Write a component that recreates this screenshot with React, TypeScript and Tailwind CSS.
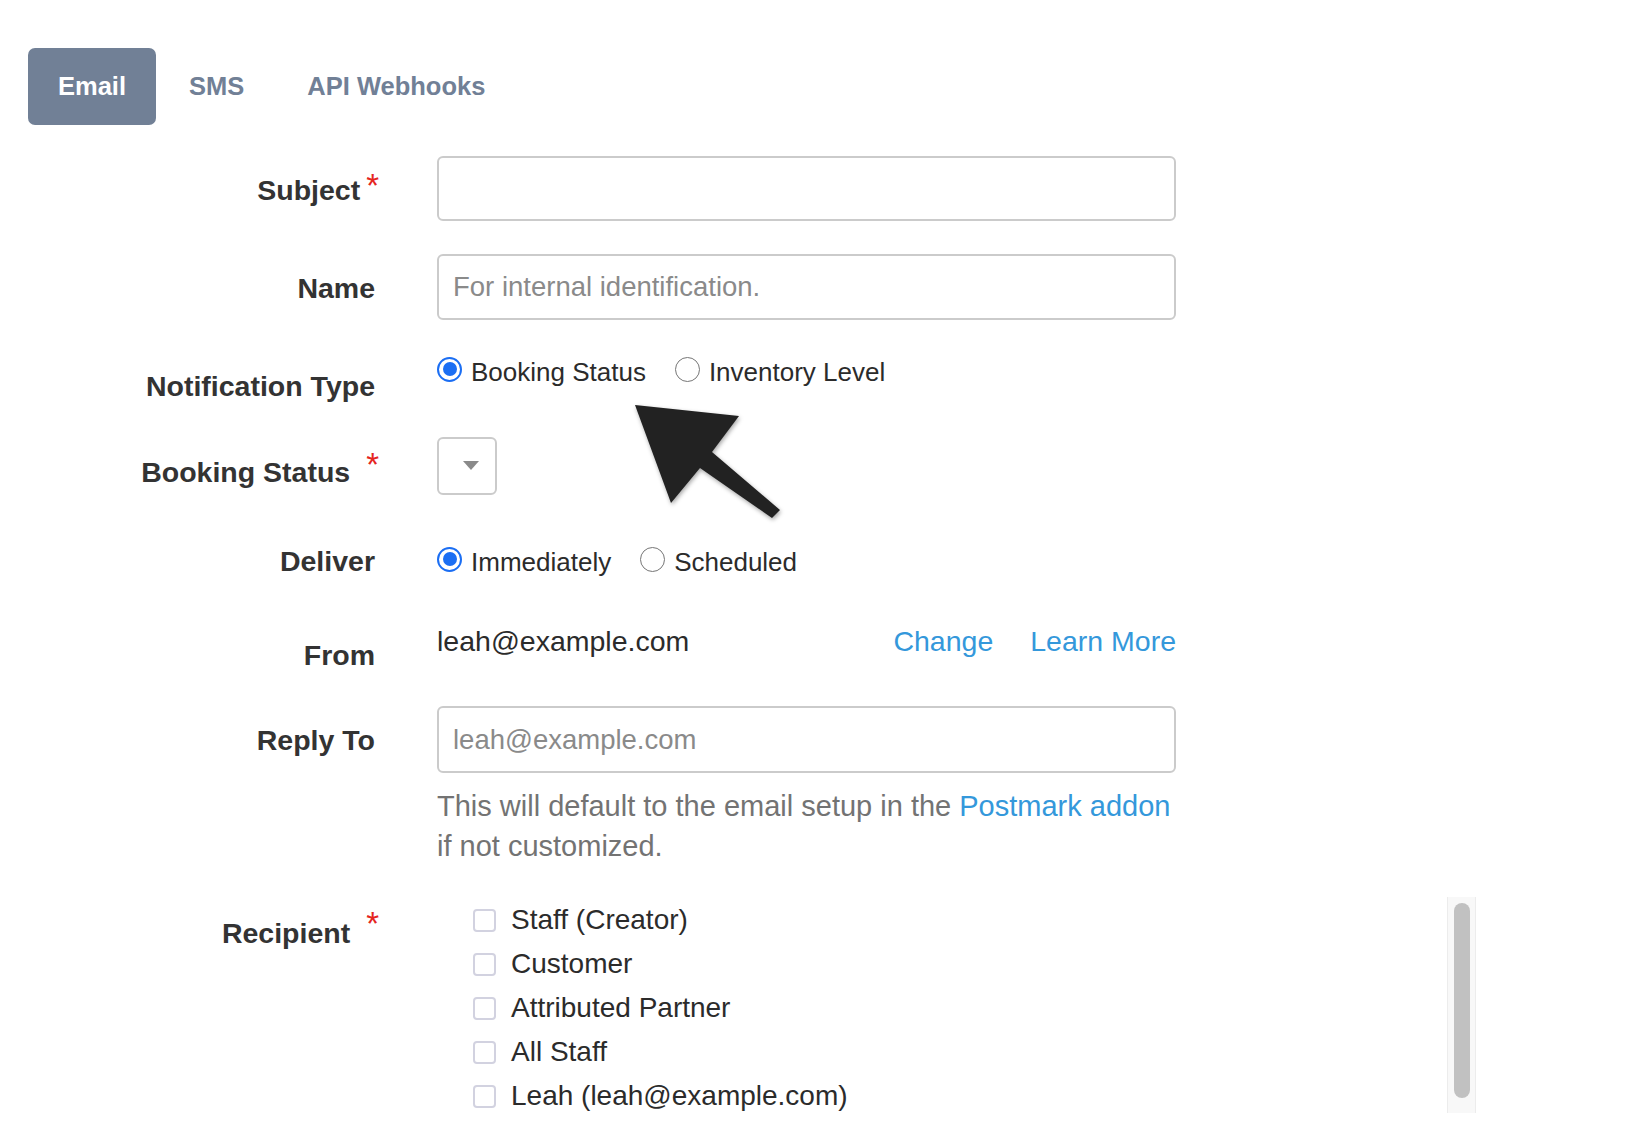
import React from "react";

function Label({ text, star, starGap = "ml-[8px]", starTop = "-top-[0px]", mt }: { text: string; star?: boolean; starGap?: string; starTop?: string; mt: string }) {
  return (
    <div className={`w-[379px] shrink-0 text-right font-bold text-[28.5px] leading-[40px] text-[#333333] whitespace-nowrap ${mt} ${star ? "" : "pr-[4px]"}`}>
      {text}
      {star && (
        <span className={`text-[#e5261f] font-normal text-[33px] relative ${starTop} ${starGap}`}>*</span>
      )}
    </div>
  );
}

function Radio({ checked, label }: { checked?: boolean; label: string }) {
  return (
    <div className="flex items-center">
      {checked ? (
        <span className="w-[25px] h-[25px] -mt-[6px] rounded-full border-[2.5px] border-[#1b6ef3] flex items-center justify-center">
          <span className="w-[14px] h-[14px] rounded-full bg-[#1b6ef3]" />
        </span>
      ) : (
        <span className="w-[25px] h-[25px] -mt-[6px] rounded-full border-[1.5px] border-[#767676]" />
      )}
      <span className="ml-[9px] text-[26px] leading-[40px] text-[#2b2b2b] whitespace-nowrap">{label}</span>
    </div>
  );
}

function Check({ label }: { label: string }) {
  return (
    <div className="h-[44px] flex items-center">
      <span className="w-[23px] h-[23px] border-2 border-[#d2d2e0] rounded-[4px] shrink-0" />
      <span className="ml-[15px] text-[28px] text-[#2b2b2b] whitespace-nowrap">{label}</span>
    </div>
  );
}

export default function App() {
  return (
    <div className="w-[1630px] h-[1132px] overflow-hidden bg-white relative font-['Liberation_Sans',Arial,sans-serif]">
      {/* Tabs */}
      <div className="flex items-center pt-[48px] pl-[28px] gap-[3px]">
        <div className="h-[77px] px-[30px] rounded-[7px] bg-[#718096] text-white font-bold text-[25.5px] flex items-center">Email</div>
        <div className="h-[77px] px-[30px] text-[#718096] font-bold text-[25.5px] flex items-center">SMS</div>
        <div className="h-[77px] px-[30px] text-[#718096] font-bold text-[25.5px] flex items-center">API Webhooks</div>
      </div>

      <div className="mt-[31px]">
        {/* Subject */}
        <div className="flex items-start">
          <Label text="Subject" star starGap="ml-[6px]" starTop="-top-[3px]" mt="mt-[13px]" />
          <div className="ml-[58px] w-[739px] h-[65px] border-2 border-[#cbcbcb] rounded-[6px]" />
        </div>

        {/* Name */}
        <div className="flex items-start mt-[33px]">
          <Label text="Name" mt="mt-[14px]" />
          <div className="ml-[58px] w-[739px] h-[66px] border-2 border-[#cbcbcb] rounded-[6px] flex items-center px-[14px] text-[27.5px] text-[#8a8a8a] whitespace-nowrap">
            For internal identification.
          </div>
        </div>

        {/* Notification Type */}
        <div className="flex items-start mt-[32px]">
          <Label text="Notification Type" mt="mt-[14px]" />
          <div className="ml-[58px] flex gap-[29px]">
            <Radio checked label="Booking Status" />
            <Radio label="Inventory Level" />
          </div>
        </div>

        {/* Booking Status */}
        <div className="flex items-start mt-[31px]">
          <Label text="Booking Status" star starGap="ml-[16px]" starTop="-top-[6px]" mt="mt-[14px]" />
          <div className="ml-[58px] w-[60px] h-[58px] border-2 border-[#cbcbcb] rounded-[6px] flex items-center justify-center pl-[8px]">
            <svg width="16" height="10" viewBox="0 0 16 10">
              <polygon points="0,0 16,0 8,9" fill="#8a8a8a" />
            </svg>
          </div>
        </div>

        {/* Deliver */}
        <div className="flex items-start mt-[46px]">
          <Label text="Deliver" mt="mt-0" />
          <div className="ml-[58px] mt-[1px] flex gap-[29px]">
            <Radio checked label="Immediately" />
            <Radio label="Scheduled" />
          </div>
        </div>

        {/* From */}
        <div className="flex items-start mt-[39px]">
          <Label text="From" mt="mt-[14px]" />
          <div className="ml-[58px] w-[739px] flex justify-between text-[28.5px] leading-[40px]">
            <span className="text-[#2b2b2b]">leah@example.com</span>
            <div className="flex gap-[37px] text-[#3498db]">
              <span>Change</span>
              <span>Learn More</span>
            </div>
          </div>
        </div>

        {/* Reply To */}
        <div className="flex items-start mt-[31px]">
          <Label text="Reply To" mt="mt-[14px]" />
          <div className="ml-[58px] w-[739px]">
            <div className="h-[67px] border-2 border-[#cbcbcb] rounded-[6px] flex items-center px-[14px] text-[27.5px] text-[#8a8a8a]">
              leah@example.com
            </div>
            <div className="mt-[13px] text-[29px] leading-[40px] text-[#737373] whitespace-nowrap">
              This will default to the email setup in the <span className="text-[#3498db]">Postmark addon</span>
              <br />
              if not customized.
            </div>
          </div>
        </div>

        {/* Recipient */}
        <div className="flex items-start mt-[31px]">
          <Label text="Recipient" star starGap="ml-[16px]" starTop="-top-[8px]" mt="mt-[15px]" />
          <div className="ml-[58px] w-[1039px] h-[216px] flex">
            <div className="flex-1 pl-[36px] pt-[1px] overflow-hidden">
              <Check label="Staff (Creator)" />
              <Check label="Customer" />
              <Check label="Attributed Partner" />
              <Check label="All Staff" />
              <Check label="Leah (leah@example.com)" />
            </div>
            <div className="w-[29px] h-full bg-[#f8f8f8] border-x border-[#ececec] pt-[6px] pb-[15px] flex justify-center">
              <div className="w-[16px] h-full rounded-full bg-[#c1c1c1]" />
            </div>
          </div>
        </div>
      </div>

      {/* Cursor arrow overlay */}
      <svg className="absolute left-[620px] top-[395px]" width="180" height="140" viewBox="0 0 180 140" style={{ filter: "drop-shadow(1px 2px 2px rgba(0,0,0,0.35))" }}>
        <polygon points="15,10 119,21 92,57 160,115 152,123 80,73 51,108" fill="#222222" />
      </svg>
    </div>
  );
}
